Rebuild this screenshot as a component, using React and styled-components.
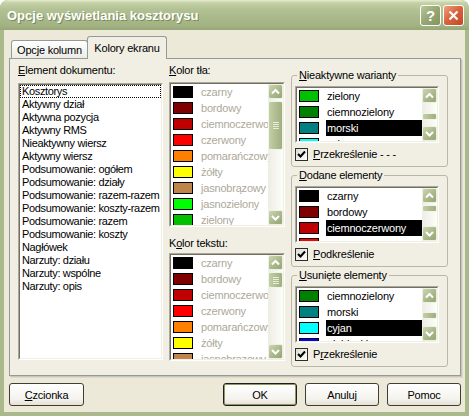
import React from 'react';
import styled, { createGlobalStyle } from 'styled-components';

const GlobalStyle = createGlobalStyle`
  html, body { margin: 0; padding: 0; background: #ffffff; }
  body {
    font-family: "Liberation Sans", Arial, sans-serif;
    font-size: 11px;
    letter-spacing: -0.2px;
    color: #000;
  }
`;

const COLORS = [
  ['czarny', '#000000'],
  ['bordowy', '#800000'],
  ['ciemnoczerwony', '#C00000'],
  ['czerwony', '#FF0000'],
  ['pomarańczowy', '#FF8000'],
  ['żółty', '#FFFF00'],
  ['jasnobrązowy', '#C0844A'],
  ['jasnozielony', '#00FF00'],
  ['zielony', '#00C000'],
  ['ciemnozielony', '#008000'],
  ['morski', '#008080'],
  ['cyjan', '#00FFFF'],
  ['niebieski', '#0000FF'],
];

const DOC_ELEMENTS = [
  'Kosztorys', 'Aktywny dział', 'Aktywna pozycja', 'Aktywny RMS', 'Nieaktywny wiersz',
  'Aktywny wiersz', 'Podsumowanie: ogółem', 'Podsumowanie: działy', 'Podsumowanie: razem-razem',
  'Podsumowanie: koszty-razem', 'Podsumowanie: razem', 'Podsumowanie: koszty', 'Nagłówek',
  'Narzuty: działu', 'Narzuty: wspólne', 'Narzuty: opis',
];

const Window = styled.div`
  width: 469px;
  height: 416px;
  display: flex;
  flex-direction: column;
  overflow: hidden;
  border-radius: 8px 8px 0 0;
  background: #A9B98C;
`;

const TitleBar = styled.div`
  height: 30px;
  flex: none;
  box-sizing: border-box;
  display: flex;
  align-items: center;
  padding: 0 5px 0 7px;
  border-radius: 8px 8px 0 0;
  background: linear-gradient(to bottom, #E6ECD2 0%, #C6D2A6 9%, #B3C294 30%, #A9B989 60%, #A2B283 85%, #96A876 100%);
`;

const Title = styled.div`
  flex: 1;
  color: #ffffff;
  font: bold 13px "Liberation Sans", Arial, sans-serif;
  letter-spacing: 0;
  text-shadow: 1px 1px 0 #7A8A5A;
  white-space: nowrap;
`;

const CaptionButton = styled.div`
  width: 21px;
  height: 21px;
  box-sizing: border-box;
  margin-left: 2px;
  border: 1px solid #ffffff;
  border-radius: 3px;
  display: flex;
  align-items: center;
  justify-content: center;
  color: #ffffff;
  font: bold 15px "Liberation Sans", Arial, sans-serif;
  background: ${(p) => (p.$close
    ? 'linear-gradient(135deg, #F0A080 0%, #DA6440 45%, #C24822 100%)'
    : 'linear-gradient(135deg, #B8C69A 0%, #97A673 50%, #84945F 100%)')};
`;

const Body = styled.div`
  flex: 1;
  margin: 0 4px 4px;
  padding: 6px 4px 6px 5px;
  background: #ECE9D8;
  display: flex;
  flex-direction: column;
`;

const TabStrip = styled.div`
  display: flex;
  align-items: flex-end;
  height: 22px;
  padding-left: 2px;
  position: relative;
  z-index: 1;
`;

const Tab = styled.div`
  box-sizing: border-box;
  width: ${(p) => p.$w}px;
  height: ${(p) => (p.$active ? 23 : 18)}px;
  margin-bottom: ${(p) => (p.$active ? -1 : 0)}px;
  margin-left: ${(p) => (p.$active ? -1 : 0)}px;
  border: 1px solid #919B9C;
  border-bottom: none;
  border-radius: 3px 3px 0 0;
  background: ${(p) => (p.$active ? '#F1EFE4' : 'linear-gradient(#FFFFFF, #ECEBE4)')};
  display: flex;
  align-items: center;
  justify-content: center;
  padding-top: ${(p) => (p.$active ? 0 : 1)}px;
  white-space: nowrap;
`;

const Panel = styled.div`
  height: 318px;
  box-sizing: border-box;
  border: 1px solid #919B9C;
  box-shadow: 1px 1px 0 #C9C6B6, 2px 2px 0 #DDDACB;
  background: #F1EFE4;
  display: flex;
  gap: 6px;
  padding-left: 8px;
`;

const Column = styled.div`
  width: ${(p) => p.$w}px;
  flex: none;
  display: flex;
  flex-direction: column;
`;

const Label = styled.div`
  height: 14px;
  line-height: 14px;
  margin-top: ${(p) => p.$mt}px;
  white-space: nowrap;
`;

const ListFrame = styled.div`
  box-sizing: border-box;
  width: ${(p) => (p.$w ? `${p.$w}px` : 'auto')};
  height: ${(p) => p.$h}px;
  margin-top: ${(p) => p.$mt || 0}px;
  flex: none;
  border: 1px solid;
  border-color: #ACA899 #FFFFFF #FFFFFF #ACA899;
`;

const ListInner = styled.div`
  box-sizing: border-box;
  height: 100%;
  border: 1px solid;
  border-color: #716F64 #F1EFE2 #F1EFE2 #716F64;
  background: #ffffff;
  display: flex;
  overflow: hidden;
`;

const Items = styled.div`
  flex: 1;
  min-width: 0;
  overflow: hidden;
  padding-left: ${(p) => p.$pl || 0}px;
`;

const DocItem = styled.div`
  box-sizing: border-box;
  height: 13px;
  line-height: 11px;
  padding-left: 1px;
  letter-spacing: -0.35px;
  border: 1px dotted ${(p) => (p.$focused ? '#000' : 'transparent')};
  white-space: nowrap;
`;

const ColorRow = styled.div`
  display: flex;
  height: 16px;
`;

const Swatch = styled.span`
  flex: none;
  width: 20px;
  height: 12px;
  box-sizing: border-box;
  margin-top: 2px;
  border: 1px solid #000;
  background: ${(p) => p.$c};
`;

const ColorName = styled.span`
  flex: 1;
  margin-left: 7px;
  padding-left: 1px;
  height: 16px;
  line-height: 16px;
  white-space: nowrap;
  overflow: hidden;
  color: ${(p) => (p.$selected ? '#fff' : p.$dim ? '#ACA899' : '#000')};
  background: ${(p) => (p.$selected ? '#000' : 'transparent')};
`;

const ScrollBar = styled.div`
  width: 15px;
  flex: none;
  display: flex;
  flex-direction: column;
  background: linear-gradient(to right, #EEEDE4, #FDFDFA);
`;

const ArrowButton = styled.div`
  height: 15px;
  flex: none;
  box-sizing: border-box;
  border: 1px solid #EDF0E2;
  border-radius: 2px;
  display: flex;
  align-items: center;
  justify-content: center;
  background: linear-gradient(135deg, #CCD6B0 0%, #A9B88B 55%, #95A673 100%);
`;

const Track = styled.div`
  flex: 1;
  display: flex;
  flex-direction: column;
  overflow: hidden;
`;

const Thumb = styled.div`
  flex: none;
  box-sizing: border-box;
  margin-top: ${(p) => p.$top}px;
  height: ${(p) => p.$size}px;
  border: 1px solid #F1F4E8;
  border-radius: 2px;
  background: linear-gradient(to right, #C4CFA5 0%, #B0BE92 50%, #A0AF80 100%);
  display: flex;
  align-items: center;
  justify-content: center;
`;

const Group = styled.fieldset`
  margin: ${(p) => p.$mt}px 0 0;
  padding: 4px 0 5px 3px;
  width: 157px;
  min-width: 0;
  box-sizing: border-box;
  border: 1px solid #BAB7A6;
  border-radius: 3px;
`;

const GroupLegend = styled.legend`
  padding: 0 2px;
  margin-left: 2px;
  height: 14px;
  line-height: 14px;
  white-space: nowrap;
`;

const CheckRow = styled.div`
  display: flex;
  align-items: center;
  gap: 5px;
  height: 14px;
  margin-top: 4px;
  white-space: nowrap;
`;

const CheckBox = styled.span`
  width: 13px;
  height: 13px;
  box-sizing: border-box;
  border: 1px solid #2E2E26;
  background: linear-gradient(135deg, #DCDCD4, #FFFFFF);
  display: flex;
  align-items: center;
  justify-content: center;
`;

const Footer = styled.div`
  display: flex;
  gap: 8px;
  margin-top: 7px;
`;

const Button = styled.div`
  box-sizing: border-box;
  width: ${(p) => p.$w || 74}px;
  height: 23px;
  margin-right: ${(p) => (p.$spacer ? 'auto' : '0')};
  border: 1px solid ${(p) => (p.$default ? '#1F1F18' : '#3E3E33')};
  box-shadow: ${(p) => (p.$default ? 'inset 0 0 0 1px #8A9A6A' : 'none')};
  border-radius: 3px;
  background: linear-gradient(to bottom, #FFFFFF 0%, #F4F3EE 70%, #E4E1D6 100%);
  display: flex;
  align-items: center;
  justify-content: center;
  white-space: nowrap;
`;

function Chevron({ down }) {
  return (
    <svg width="9" height="7" viewBox="0 0 9 7">
      <polyline
        points={down ? '1,2 4.5,5.5 8,2' : '1,5.5 4.5,2 8,5.5'}
        fill="none"
        stroke="#ffffff"
        strokeWidth="2"
      />
    </svg>
  );
}

function Grip() {
  return (
    <svg width="6" height="7" viewBox="0 0 6 7">
      {[0.5, 2.5, 4.5, 6.5].map((y) => (
        <line key={y} x1="0" x2="6" y1={y} y2={y} stroke="#E8EDD9" strokeWidth="1" />
      ))}
    </svg>
  );
}

function Scroll({ top, size }) {
  return (
    <ScrollBar>
      <ArrowButton><Chevron /></ArrowButton>
      <Track>
        <Thumb $top={top} $size={size}>{size > 14 && <Grip />}</Thumb>
      </Track>
      <ArrowButton><Chevron down /></ArrowButton>
    </ScrollBar>
  );
}

function ColorList({ width, height, mt, start = 0, count, selected, dim, thumbTop, thumbSize }) {
  const rows = COLORS.slice(start, start + count);
  return (
    <ListFrame $w={width} $h={height} $mt={mt}>
      <ListInner>
        <Items $pl={2}>
          {rows.map(([name, c], i) => (
            <ColorRow key={name}>
              <Swatch $c={c} />
              <ColorName $dim={dim} $selected={start + i === selected}>{name}</ColorName>
            </ColorRow>
          ))}
        </Items>
        <Scroll top={thumbTop} size={thumbSize} />
      </ListInner>
    </ListFrame>
  );
}

function Check() {
  return (
    <svg width="9" height="9" viewBox="0 0 9 9">
      <polyline points="1,4 3.5,6.5 8,1.5" fill="none" stroke="#000" strokeWidth="2" />
    </svg>
  );
}

function VariantGroup({ mt, title, start, selected, check, thumbTop }) {
  return (
    <Group $mt={mt}>
      <GroupLegend>{title}</GroupLegend>
      <ColorList width={144} height={57} start={start} count={4} selected={selected} thumbTop={thumbTop} thumbSize={7} />
      <CheckRow>
        <CheckBox><Check /></CheckBox>
        <span>{check}</span>
      </CheckRow>
    </Group>
  );
}

export default function App() {
  return (
    <>
      <GlobalStyle />
      <Window>
        <TitleBar>
          <Title>Opcje wyświetlania kosztorysu</Title>
          <CaptionButton>?</CaptionButton>
          <CaptionButton $close>
            <svg width="11" height="11" viewBox="0 0 11 11">
              <path d="M1.5 1.5 L9.5 9.5 M9.5 1.5 L1.5 9.5" stroke="#fff" strokeWidth="2.2" />
            </svg>
          </CaptionButton>
        </TitleBar>
        <Body>
          <TabStrip>
            <Tab $w={77}>Opcje kolumn</Tab>
            <Tab $w={80} $active>Kolory ekranu</Tab>
          </TabStrip>
          <Panel>
            <Column $w={145}>
              <Label $mt={4}><u>E</u>lement dokumentu:</Label>
              <ListFrame $h={277} $mt={6}>
                <ListInner>
                  <Items>
                    {DOC_ELEMENTS.map((name, i) => (
                      <DocItem key={name} $focused={i === 0}>{name}</DocItem>
                    ))}
                  </Items>
                </ListInner>
              </ListFrame>
            </Column>
            <Column $w={116}>
              <Label $mt={4}><u>K</u>olor tła:</Label>
              <ColorList height={145} mt={5} count={9} dim thumbTop={2} thumbSize={49} />
              <Label $mt={9}>K<u>o</u>lor tekstu:</Label>
              <ColorList height={108} mt={3} count={7} dim thumbTop={2} thumbSize={16} />
            </Column>
            <Column $w={157}>
              <VariantGroup
                mt={9}
                title={<><u>N</u>ieaktywne warianty</>}
                start={8}
                selected={10}
                thumbTop={10}
                check={<><u>P</u>rzekreślenie - - -</>}
              />
              <VariantGroup
                mt={1}
                title={<><u>D</u>odane elementy</>}
                start={0}
                selected={2}
                thumbTop={2}
                check={<><u>P</u>odkreślenie</>}
              />
              <VariantGroup
                mt={1}
                title={<><u>U</u>sunięte elementy</>}
                start={9}
                selected={11}
                thumbTop={9}
                check={<>P<u>r</u>zekreślenie</>}
              />
            </Column>
          </Panel>
          <Footer>
            <Button $w={75} $spacer><span><u>C</u>zcionka</span></Button>
            <Button $default>OK</Button>
            <Button>Anuluj</Button>
            <Button>Pomoc</Button>
          </Footer>
        </Body>
      </Window>
    </>
  );
}
